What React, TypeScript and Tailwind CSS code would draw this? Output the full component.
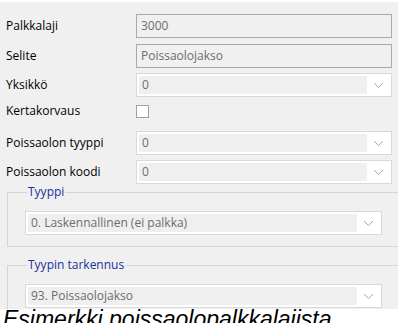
import React from 'react';

const font = { fontFamily: '"Open Sans", "Liberation Sans", sans-serif' };

function Chevron() {
    return (
        <svg width="11" height="7" viewBox="0 0 11 7" className="shrink-0">
            <path d="M1 1 L5.5 5.5 L10 1" fill="none" stroke="#a8a8a8" strokeWidth="1" />
        </svg>
    );
}

function TextBox({ value }: { value: string }) {
    return (
        <div className="w-[256px] h-[24px] border border-[#a9a9a9] bg-[#f0f0f0] flex items-center px-[4px] text-[12px] text-[#6d6d6d]">
            {value}
        </div>
    );
}

function Combo({ value, width }: { value: string; width: string }) {
    return (
        <div className={`${width} h-[24px] border border-[#d9d9d9] bg-white flex items-center p-[2px]`}>
            <div className="flex-1 h-full bg-[#efefef] flex items-center px-[3px] text-[12px] text-[#6d6d6d]">{value}</div>
            <div className="w-[22px] flex justify-center">
                <Chevron />
            </div>
        </div>
    );
}

function Row({ label, children, className }: { label: string; children: React.ReactNode; className?: string }) {
    return (
        <div className={`flex items-center ${className ?? ''}`}>
            <div className="w-[130px] text-[12px] text-black">{label}</div>
            {children}
        </div>
    );
}

function Group({ title, children, className }: { title: string; children: React.ReactNode; className?: string }) {
    return (
        <fieldset className={`ml-[7px] w-[391px] border border-[#d5d5d5] ${className ?? ''}`}>
            <legend className="ml-[2px] px-[1px] text-[12px] text-[#1b2f9c] leading-[14px]">{title}</legend>
            {children}
        </fieldset>
    );
}

export default function App() {
    return (
        <div className="w-[401px] h-[323px] bg-white overflow-hidden" style={font}>
            <div className="mt-[2px] w-[398px] h-[307px] bg-[#f0f0f0] overflow-hidden pt-[12px]">
                <div className="px-[6px] flex flex-col">
                    <Row label="Palkkalaji">
                        <TextBox value="3000" />
                    </Row>
                    <Row label="Selite" className="mt-[6px]">
                        <TextBox value="Poissaolojakso" />
                    </Row>
                    <Row label="Yksikkö" className="mt-[5px]">
                        <Combo value="0" width="w-[256px]" />
                    </Row>
                    <Row label="Kertakorvaus" className="mt-[2px] h-[24px]">
                        <div className="w-[13px] h-[13px] border border-[#a0a0a0] bg-white" />
                    </Row>
                    <Row label="Poissaolon tyyppi" className="mt-[8px]">
                        <Combo value="0" width="w-[256px]" />
                    </Row>
                    <Row label="Poissaolon koodi" className="mt-[5px]">
                        <Combo value="0" width="w-[256px]" />
                    </Row>
                </div>
                <Group title="Tyyppi" className="mt-[1px] h-[62px] pt-[12px] px-[17px]">
                    <Combo value="0. Laskennallinen (ei palkka)" width="w-[357px]" />
                </Group>
                <Group title="Tyypin tarkennus" className="mt-[11px] h-[70px] pt-[12px] px-[17px]">
                    <Combo value="93. Poissaolojakso" width="w-[357px]" />
                </Group>
            </div>
            <div
                className="pl-[3px] text-[23px] italic text-black leading-[20px] whitespace-nowrap"
                style={{ fontFamily: '"Liberation Sans", Arial, sans-serif' }}
            >
                Esimerkki poissaolopalkkalajista
            </div>
        </div>
    );
}
